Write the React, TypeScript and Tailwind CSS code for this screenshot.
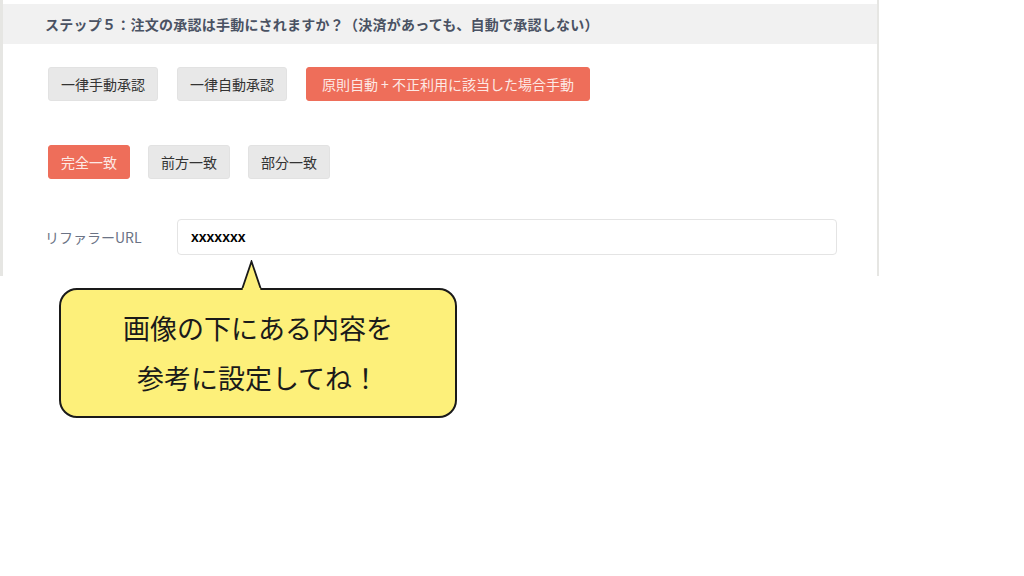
const font = "font-['Noto_Sans_CJK_JP',sans-serif]";

const Btn = ({ label, active, w }: { label: string; active?: boolean; w: string }) => (
  <div
    className={`${w} h-[34px] flex items-center justify-center rounded-[3px] border text-[14px] ${
      active
        ? "bg-[#ee6e5a] border-[#ee6e5a] text-[#fde9e5]"
        : "bg-[#e8e8e8] border-[#e2e2e2] text-[#333]"
    }`}
  >
    {label}
  </div>
);

export default function App() {
  return (
    <div className={`relative w-[1024px] h-[576px] bg-white ${font}`}>
      <div className="w-[879px] h-[276px] pt-[4px] border-l-[3px] border-r-[2px] border-[#e6e6e3]">
        <div className="h-[40px] bg-[#f1f1f1] flex items-center pl-[42px] text-[14px] tracking-[0.25px] font-bold text-[#4a5263]">
          ステップ５：注文の承認は手動にされますか？（決済があっても、自動で承認しない）
        </div>
        <div className="flex gap-[19px] pl-[45px] mt-[23px]">
          <Btn label="一律手動承認" w="w-[110px]" />
          <Btn label="一律自動承認" w="w-[110px]" />
          <Btn label="原則自動 + 不正利用に該当した場合手動" w="w-[284px]" active />
        </div>
        <div className="flex gap-[18px] pl-[45px] mt-[44px]">
          <Btn label="完全一致" w="w-[82px]" active />
          <Btn label="前方一致" w="w-[82px]" />
          <Btn label="部分一致" w="w-[82px]" />
        </div>
        <div className="flex items-center pl-[42px] mt-[40px]">
          <div className="w-[132px] text-[14px] text-[#6b7385]">リファラーURL</div>
          <div className="w-[660px] h-[36px] flex items-center pl-[13px] border border-[#e4e4e4] rounded-[4px] text-[14px] font-bold text-black font-['Liberation_Sans',sans-serif]">
            xxxxxxx
          </div>
        </div>
      </div>

      <div className="absolute left-[59px] top-[288px] w-[398px] h-[130px]">
        <div className="w-full h-full bg-[#fdf07a] border-2 border-[#1a1a1a] rounded-[18px] flex flex-col items-center justify-center gap-[16px] text-[27px] text-[#1a1a1a] leading-[34px]">
          <div>画像の下にある内容を</div>
          <div>参考に設定してね！</div>
        </div>
        <svg className="absolute left-[181px] top-[-28px]" width="26" height="31" viewBox="0 0 26 31">
          <path d="M2 29.5 L11.5 1.5 L21 29.5" fill="#fdf07a" stroke="#1a1a1a" strokeWidth="1.8" strokeLinejoin="miter" />
          <rect x="2.8" y="28" width="17.4" height="3" fill="#fdf07a" />
        </svg>
      </div>
    </div>
  );
}
